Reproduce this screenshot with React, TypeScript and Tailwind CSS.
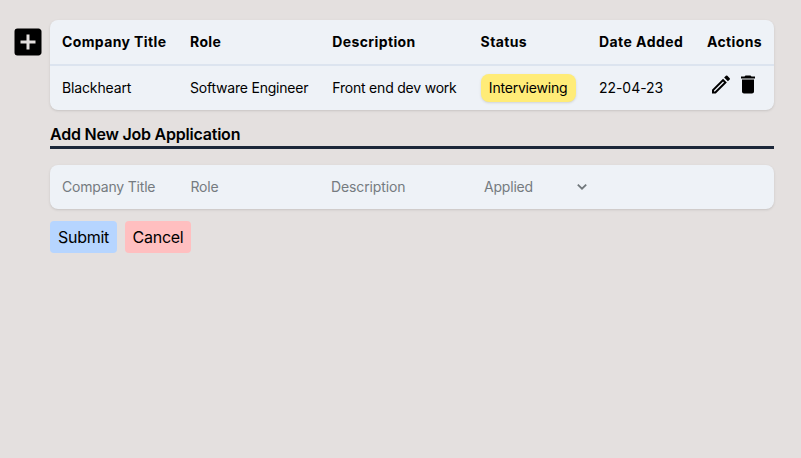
import { MdAddBox, MdDelete, MdOutlineModeEdit } from "react-icons/md";

const columns = "grid grid-cols-[128px_142.3px_148.3px_118.4px_108px_79px]";

export default function App() {
  return (
    <div className="flex min-h-screen items-start bg-[#e4e0df] pl-2.5 font-['Inter',sans-serif] text-black">
      <button className="mt-6 h-9 w-9 shrink-0" aria-label="Add">
        <MdAddBox className="h-9 w-9" />
      </button>
      <main className="ml-1 mt-5 w-[724px]">
        <section className="h-[90px] rounded-lg bg-[#eef2f7] text-sm shadow-sm">
          <div className={`${columns} h-[46px] items-center border-b-2 border-[#dce4ef] font-bold tracking-[0.38px]`}>
            <span className="pl-3">Company Title</span>
            <span className="pl-3">Role</span>
            <span className="pl-3">Description</span>
            <span className="pl-3">Status</span>
            <span className="pl-3 tracking-[0.45px]">Date Added</span>
            <span className="pl-3">Actions</span>
          </div>
          <div className={`${columns} h-11 items-center whitespace-nowrap tracking-[-0.21px]`}>
            <span className="pl-3 tracking-[-0.14px]">Blackheart</span>
            <span className="pl-3">Software Engineer</span>
            <span className="pl-3">Front end dev work</span>
            <span className="ml-3 h-7 w-[95px] rounded-lg bg-[#ffec78] text-center leading-7 shadow-sm">Interviewing</span>
            <span className="pl-3 tracking-[-0.05px]">22-04-23</span>
            <span className="flex gap-[3px] pb-1.5 pl-3.5">
              <MdOutlineModeEdit className="h-6 w-6" viewBox="0 0.5 24 24" />
              <MdDelete className="h-6 w-6" viewBox="0 0.5 24 24" />
            </span>
          </div>
        </section>
        <h2 className="mt-3 h-[27px] border-b-[3px] border-[#1c2739] text-base font-semibold leading-6 tracking-[-0.22px]">
          Add New Job Application
        </h2>
        <form className="mt-4 flex h-11 items-center rounded-lg bg-[#eef2f7] text-sm tracking-[-0.2px] text-[#757b80] shadow-sm">
          <span className="w-[128.5px] pl-3">Company Title</span>
          <span className="w-[140.5px] pl-3">Role</span>
          <span className="w-[153px] pl-3 tracking-[-0.13px]">Description</span>
          <span className="flex w-[115px] items-center justify-between pl-3">
            Applied
            <svg className="-mt-px h-[6px] w-[10px]" viewBox="0 0 10 6" fill="none" stroke="#70777b" strokeWidth="1.8">
              <path d="M.8.7 5 4.7 9.2.7" />
            </svg>
          </span>
        </form>
        <div className="mt-3 flex gap-2 text-base tracking-[-0.27px]">
          <button className="h-8 w-[67px] rounded bg-[#b6d5ff]">Submit</button>
          <button className="h-8 w-[66px] rounded bg-[#ffbfc0]">Cancel</button>
        </div>
      </main>
    </div>
  );
}
